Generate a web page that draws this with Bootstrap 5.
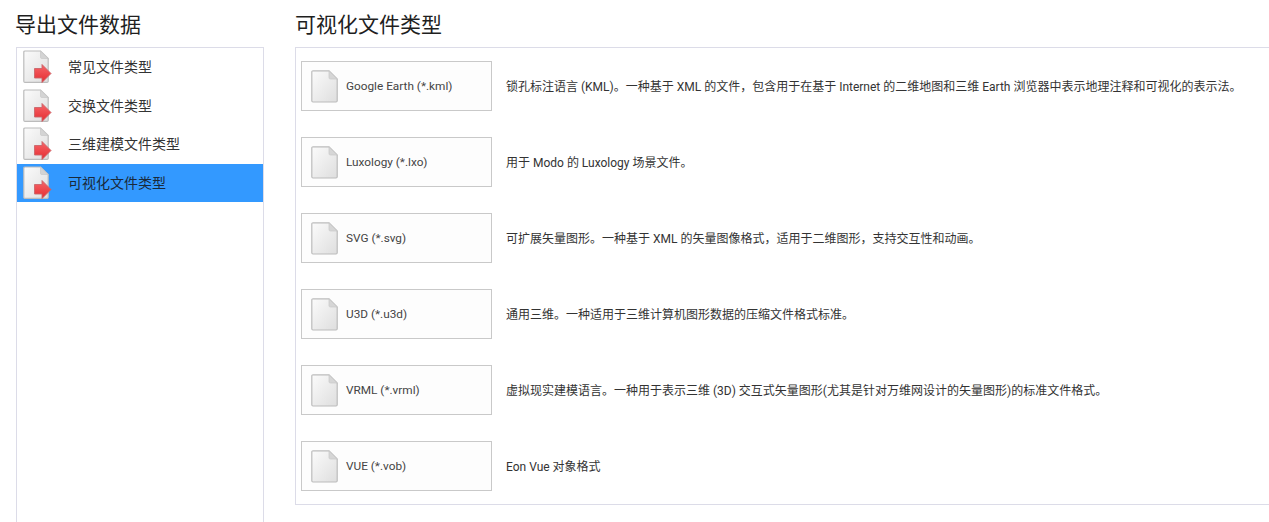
<!DOCTYPE html>
<html lang="zh">
<head>
<meta charset="utf-8">
<title>导出文件数据</title>
<link rel="stylesheet" href="https://cdn.jsdelivr.net/npm/bootstrap@5.3.0/dist/css/bootstrap.min.css">
<style>
html,body{height:522px;overflow:hidden;background:#fff}
body{font-family:Roboto,"Noto Sans CJK SC",sans-serif;color:#222;font-size:12px}
.page-wrap{width:1300px;height:522px;padding:10px 0 0 15px}
.pane-title{font-size:21px;line-height:30px;height:37px;margin:0;font-weight:400;color:#1f1f1f}
.side{width:249px;margin-right:31px;flex:none}
.side-box{border:1px solid #dcdce8;border-bottom:0;height:480px;margin-left:1px;width:248px}
.side-row{height:38.5px;padding-left:6px;color:#333;font-size:14px}
.side-row.is-on{background:#3399ff;color:#1a2a3a}
.side-row svg{flex:none;margin-right:15px}
.row-label{padding-top:1px}
.main{width:1000px;flex:none}
.main-box{border:1px solid #dcdce8;height:458px;padding:13px 5px 0 5px}
.ftype{height:76px;align-items:flex-start}
.ftype-btn{width:191px;height:50px;border:1px solid #c9c9c9;background:#fdfdfd;padding-left:9px;color:#444;flex:none;font-size:11.8px}
.ftype-btn svg{flex:none;margin-right:7px}
.ftype-desc{line-height:50px;padding-top:1px;margin-left:14px;color:#333;font-size:12px;white-space:nowrap}
.cap-text{padding-top:1px}
</style>
</head>
<body>
<svg width="0" height="0" class="position-absolute">
<defs>
<linearGradient id="pg" x1="0" y1="0" x2="1" y2="1"><stop offset="0" stop-color="#fbfbfb"/><stop offset="1" stop-color="#dedede"/></linearGradient>
<linearGradient id="ar" x1="0" y1="0" x2="0" y2="1"><stop offset="0" stop-color="#f6666a"/><stop offset="1" stop-color="#e52c30"/></linearGradient>
<symbol id="doc-big" viewBox="0 0 30 34">
<path d="M.8 2Q.8 1 2 1H17.5L25.2 8.5V31.2Q25.2 32.4 24 32.4H2Q.8 32.4 .8 31.2Z" fill="url(#pg)" stroke="#bcbcbc" stroke-width="1.2"/>
<path d="M17.5 1V7.2Q17.5 8.5 18.8 8.5H25.2Z" fill="#d4d4d4" stroke="#c8c8c8" stroke-width=".7"/>
<path d="M11.5 18.5H19V14.5L28 23.5L19 32.5V28H11.5Z" fill="url(#ar)" stroke="#c9656a" stroke-width=".9" stroke-linejoin="round"/>
</symbol>
<symbol id="doc-plain" viewBox="0 0 28 33">
<path d="M.8 2Q.8 .9 2 .9H18L26.2 9V30.8Q26.2 32 25 32H2Q.8 32 .8 30.8Z" fill="url(#pg)" stroke="#bcbcbc" stroke-width="1.2"/>
<path d="M18 .9V7.6Q18 9 19.4 9H26.2Z" fill="#d6d6d6" stroke="#c8c8c8" stroke-width=".7"/>
</symbol>
</defs>
</svg>
<div class="page-wrap d-flex">
  <div class="side">
    <h1 class="pane-title">导出文件数据</h1>
    <div class="side-box">
      <div class="side-row d-flex align-items-center"><svg width="30" height="34"><use href="#doc-big"/></svg><span class="row-label">常见文件类型</span></div>
      <div class="side-row d-flex align-items-center"><svg width="30" height="34"><use href="#doc-big"/></svg><span class="row-label">交换文件类型</span></div>
      <div class="side-row d-flex align-items-center"><svg width="30" height="34"><use href="#doc-big"/></svg><span class="row-label">三维建模文件类型</span></div>
      <div class="side-row is-on d-flex align-items-center"><svg width="30" height="34"><use href="#doc-big"/></svg><span class="row-label">可视化文件类型</span></div>
    </div>
  </div>
  <div class="main">
    <h2 class="pane-title">可视化文件类型</h2>
    <div class="main-box">
      <div class="ftype d-flex"><div class="ftype-btn d-flex align-items-center"><svg width="28" height="33"><use href="#doc-plain"/></svg><span class="cap-text">Google Earth (*.kml)</span></div><div class="ftype-desc">锁孔标注语言 (KML)。一种基于 XML 的文件，包含用于在基于 Internet 的二维地图和三维 Earth 浏览器中表示地理注释和可视化的表示法。</div></div>
      <div class="ftype d-flex"><div class="ftype-btn d-flex align-items-center"><svg width="28" height="33"><use href="#doc-plain"/></svg><span class="cap-text">Luxology (*.lxo)</span></div><div class="ftype-desc">用于 Modo 的 Luxology 场景文件。</div></div>
      <div class="ftype d-flex"><div class="ftype-btn d-flex align-items-center"><svg width="28" height="33"><use href="#doc-plain"/></svg><span class="cap-text">SVG (*.svg)</span></div><div class="ftype-desc">可扩展矢量图形。一种基于 XML 的矢量图像格式，适用于二维图形，支持交互性和动画。</div></div>
      <div class="ftype d-flex"><div class="ftype-btn d-flex align-items-center"><svg width="28" height="33"><use href="#doc-plain"/></svg><span class="cap-text">U3D (*.u3d)</span></div><div class="ftype-desc">通用三维。一种适用于三维计算机图形数据的压缩文件格式标准。</div></div>
      <div class="ftype d-flex"><div class="ftype-btn d-flex align-items-center"><svg width="28" height="33"><use href="#doc-plain"/></svg><span class="cap-text">VRML (*.vrml)</span></div><div class="ftype-desc">虚拟现实建模语言。一种用于表示三维 (3D) 交互式矢量图形(尤其是针对万维网设计的矢量图形)的标准文件格式。</div></div>
      <div class="ftype d-flex"><div class="ftype-btn d-flex align-items-center"><svg width="28" height="33"><use href="#doc-plain"/></svg><span class="cap-text">VUE (*.vob)</span></div><div class="ftype-desc">Eon Vue 对象格式</div></div>
    </div>
  </div>
</div>
<script src="https://cdn.jsdelivr.net/npm/bootstrap@5.3.0/dist/js/bootstrap.bundle.min.js"></script>
</body>
</html>
